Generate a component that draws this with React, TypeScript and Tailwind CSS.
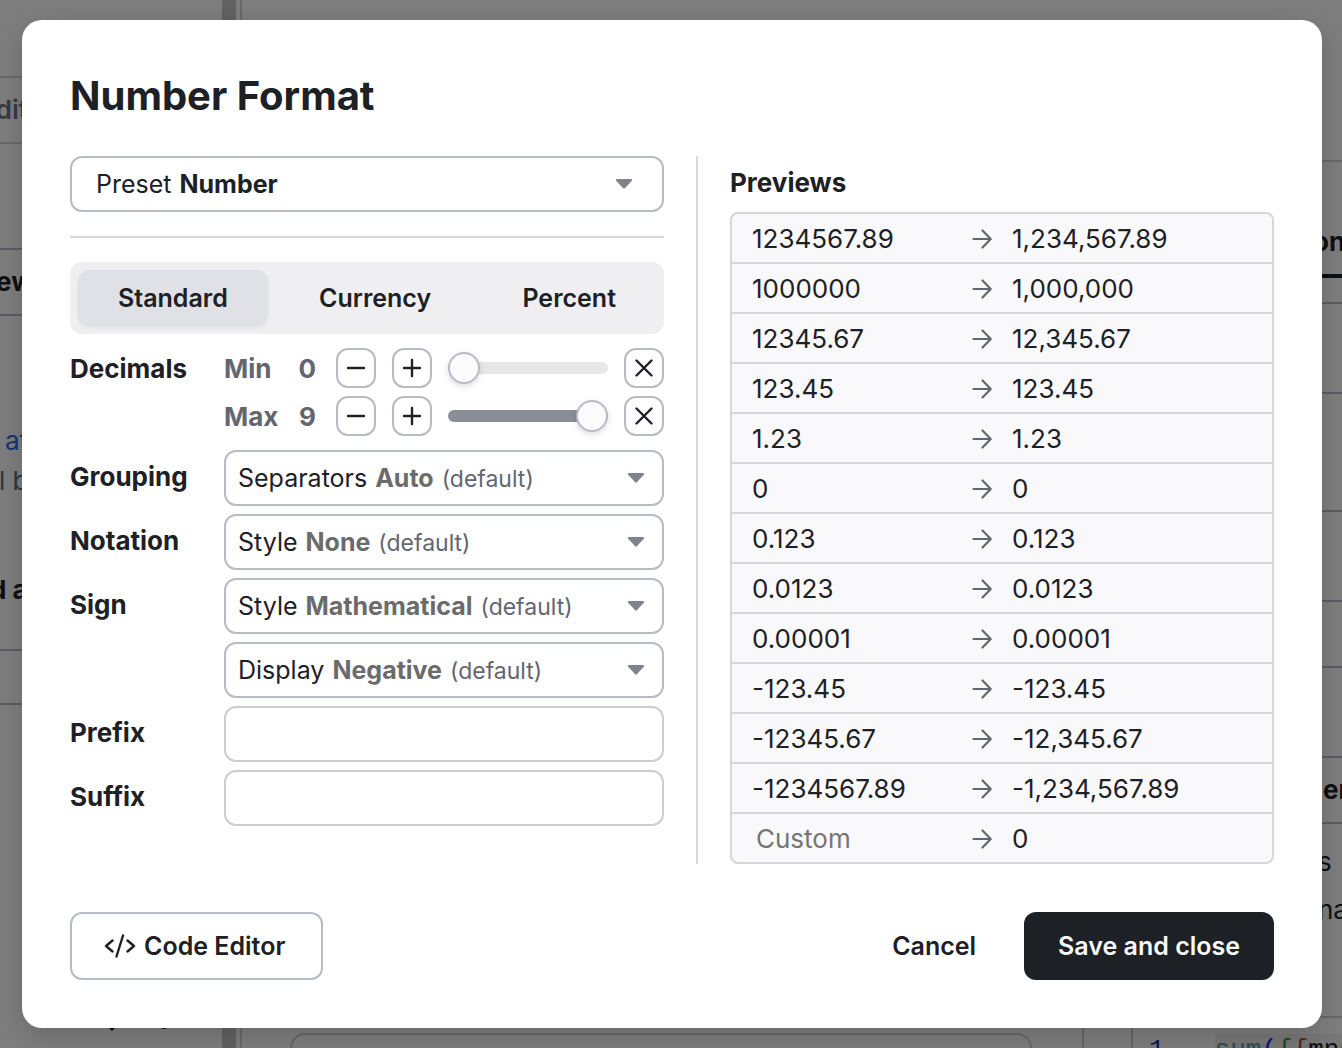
import { useState } from "react";
import type { ReactNode } from "react";

const previews = [
  ["1234567.89", "1,234,567.89"],
  ["1000000", "1,000,000"],
  ["12345.67", "12,345.67"],
  ["123.45", "123.45"],
  ["1.23", "1.23"],
  ["0", "0"],
  ["0.123", "0.123"],
  ["0.0123", "0.0123"],
  ["0.00001", "0.00001"],
  ["-123.45", "-123.45"],
  ["-12345.67", "-12,345.67"],
  ["-1234567.89", "-1,234,567.89"],
];

function Caret() {
  return (
    <svg className="h-[10px] w-4 shrink-0" viewBox="0 0 16 10" fill="#80838e" aria-hidden="true">
      <path d="M1.2 0H14.8C15.9 0 16.4 1.3 15.6 2.1L9.1 8.9C8.5 9.6 7.5 9.6 6.9 8.9L.4 2.1C-.4 1.3.1 0 1.2 0Z" />
    </svg>
  );
}

function Arrow() {
  return (
    <svg className="block h-5 w-5" viewBox="0 0 20 20" fill="none" stroke="#63666e" strokeWidth="2.2" strokeLinecap="round" strokeLinejoin="round" aria-hidden="true">
      <path d="M1.5 10H18.5M10.5 1.5L18.7 10L10.5 18.5" />
    </svg>
  );
}

function Picker({ label, options, suffix, wide }: { label: string; options: string[]; suffix?: string; wide?: boolean }) {
  const [value, setValue] = useState(options[0]);
  return (
    <label
      className={
        "relative flex h-14 w-full shrink-0 items-center justify-between rounded-xl border-2 border-[#b8bac6] bg-white " +
        (wide ? "pl-6 pr-[30px]" : "pl-3 pr-[18px]")
      }
    >
      <span className="flex items-baseline gap-2 whitespace-nowrap text-[25px] leading-8">
        <span>{label}</span>
        <span className={suffix ? "font-bold text-[#6b6b6b]" : "font-bold"}>{value}</span>
        {suffix && <span className="text-[23px] text-[#63666e]">{suffix}</span>}
      </span>
      <Caret />
      <select
        aria-label={label}
        value={value}
        onChange={(e) => setValue(e.target.value)}
        className="absolute inset-0 h-full w-full cursor-pointer opacity-0"
      >
        {options.map((o) => (
          <option key={o}>{o}</option>
        ))}
      </select>
    </label>
  );
}

function IconButton({ label, path, onClick }: { label: string; path: string; onClick: () => void }) {
  return (
    <button
      type="button"
      aria-label={label}
      onClick={onClick}
      className="flex h-10 w-10 shrink-0 items-center justify-center rounded-xl border-2 border-[#b8bac6] bg-white"
    >
      <svg className="h-5 w-5" viewBox="0 0 20 20" fill="none" stroke="#1d2025" strokeWidth="2.4" strokeLinecap="round" aria-hidden="true">
        <path d={path} />
      </svg>
    </button>
  );
}

function DecimalRow({ label, initial }: { label: string; initial: number }) {
  const [value, setValue] = useState(initial);
  const percent = (value / 9) * 100;
  return (
    <div className="flex h-10 items-center gap-4">
      <div className="flex w-24 justify-between pr-1 pt-[2px] text-[26px] leading-8 font-bold text-[#63666e]">
        <span>{label}</span>
        <span>{value}</span>
      </div>
      <IconButton label={"Decrease " + label} path="M2 10H18" onClick={() => setValue(Math.max(0, value - 1))} />
      <IconButton label={"Increase " + label} path="M2 10H18M10 2V18" onClick={() => setValue(Math.min(9, value + 1))} />
      <input
        type="range"
        aria-label={label + " decimals"}
        min={0}
        max={9}
        value={value}
        onChange={(e) => setValue(Number(e.target.value))}
        style={{ backgroundImage: `linear-gradient(to right, #8b8e97 ${percent}%, #e7e7e7 ${percent}%)` }}
        className="h-3 min-w-0 flex-1 appearance-none rounded-full [&::-webkit-slider-thumb]:h-8 [&::-webkit-slider-thumb]:w-8 [&::-webkit-slider-thumb]:appearance-none [&::-webkit-slider-thumb]:rounded-full [&::-webkit-slider-thumb]:border-2 [&::-webkit-slider-thumb]:border-[#b8bac6] [&::-webkit-slider-thumb]:bg-[#fcfcfd] [&::-webkit-slider-thumb]:shadow-[0_2px_6px_rgba(0,0,0,0.14)]"
      />
      <IconButton label={"Clear " + label} path="M2.5 2.5L17.5 17.5M17.5 2.5L2.5 17.5" onClick={() => setValue(initial)} />
    </div>
  );
}

function Field({ label, children }: { label: string; children: ReactNode }) {
  return (
    <div className="flex">
      <div className="w-[154px] shrink-0 pt-[11px] text-[26px] leading-8 font-bold">{label}</div>
      <div className="flex min-w-0 flex-1 flex-col gap-2">{children}</div>
    </div>
  );
}

function TextField({ label }: { label: string }) {
  const id = label.toLowerCase();
  return (
    <div className="flex h-14">
      <label htmlFor={id} className="w-[154px] shrink-0 pt-[11px] text-[26px] leading-8 font-bold">
        {label}
      </label>
      <input id={id} type="text" className="h-14 min-w-0 flex-1 rounded-xl border-2 border-[#cccdd3] bg-white px-3 text-[25px]" />
    </div>
  );
}

function Background() {
  return (
    <div aria-hidden="true" className="flex h-screen overflow-hidden bg-white whitespace-nowrap">
      <div className="w-[222px] shrink-0 overflow-hidden text-[26px] leading-8">
        <div className="h-[76px]" />
        <div className="-ml-5 flex h-[68px] items-center border-y-2 border-[#d5d5d8] font-semibold text-[#77777c]">Edit</div>
        <div className="h-[104px]" />
        <div className="-ml-[4px] flex h-[68px] items-center border-y-2 border-[#b8bac6] font-bold">ew</div>
        <div className="h-[109px] px-[5px] pt-[109px] text-[#2f6bea]">at</div>
        <div className="-ml-px pt-[40px] text-[#66686f]">l be</div>
        <div className="-ml-[10px] pt-[77px] font-bold">d a</div>
        <div className="mt-[43px] h-14 border-y-2 border-[#b8bac6]" />
        <div className="flex h-[326px] items-end gap-10 pl-[106px]">
          <svg className="h-[18px] w-3" viewBox="0 0 12 18" fill="none" stroke="#1d2025" strokeWidth="3">
            <path d="M1 11L6 16L11 11" />
          </svg>
          <svg className="h-4 w-3" viewBox="0 0 12 16" fill="none" stroke="#1d2025" strokeWidth="2">
            <circle cx="6" cy="8" r="5" />
          </svg>
        </div>
      </div>
      <div className="w-[14px] shrink-0 bg-[#c6c6c6]" />
      <div className="ml-1 flex flex-1 items-end border-l-2 border-[#d5d5d8] pl-12">
        <div className="h-[15px] flex-1 rounded-t-2xl border-2 border-b-0 border-[#d0d0d3]" />
        <div className="ml-[50px] box-content h-8 w-[47px] border-x-2 border-[#d0d0d3]" />
      </div>
      <div className="w-[209px] shrink-0 overflow-hidden text-[26px] leading-8">
        <div className="box-content h-[160px] border-b-2 border-[#d5d5d8]" />
        <div className="h-28 pl-[180px] pt-16 font-bold">on</div>
        <div className="h-1 bg-[#1d2025]" />
        <div className="h-6" />
        <div className="h-[92px] border-y-2 border-[#b8bac6]" />
        <div className="h-[118px] border-b-2 border-[#b8bac6]" />
        <div className="h-[90px] border-b-2 border-[#b8bac6]" />
        <div className="h-[66px] border-b-2 border-[#b8bac6]" />
        <div className="h-[90px] border-b-2 border-[#b8bac6]" />
        <div className="flex h-[66px] items-center border-b-2 border-[#b8bac6] pl-[190px] font-bold">en</div>
        <div className="flex h-[194px] flex-col gap-4 border-b-2 border-[#d0d0d3] pl-[185px] pt-[22px]">
          <span>s</span>
          <span>na</span>
        </div>
        <div className="flex gap-[50px] pl-4 pt-4 font-mono">
          <span className="text-[#1b2fa0]">1</span>
          <span className="bg-[#f0f0f0]">
            <span className="text-[#5c97a8]">sum</span>
            <span className="text-[#1020ff]">(</span>
            <span className="text-[#3f9142]">{"{"}</span>
            <span className="text-[#a4522d]">{"{"}</span>mnn
          </span>
        </div>
      </div>
    </div>
  );
}

export default function App() {
  const [tab, setTab] = useState("Standard");
  return (
    <div className="relative font-['Inter',sans-serif] text-[#1d2025] [font-optical-sizing:none]">
      <Background />
      <div className="absolute inset-0 flex items-start justify-center bg-black/50 py-5 pl-[22px] pr-5">
        <div role="dialog" aria-modal="true" aria-labelledby="title" className="w-full rounded-[20px] bg-white p-12 shadow-[0_8px_32px_rgba(0,0,0,0.2)]">
          <h1 id="title" className="text-[40px] leading-14 font-bold">
            Number Format
          </h1>

          <div className="mt-8 grid grid-cols-[minmax(0,1fr)_2px_544px] gap-8">
            <div>
              <Picker label="Preset" options={["Number", "Currency", "Percent", "Date"]} wide />
              <hr className="my-6 border-t-2 border-[#d8d9e0]" />
              <div role="tablist" className="flex h-[72px] justify-between rounded-xl bg-[#efeff1] p-2">
                {["Standard", "Currency", "Percent"].map((t) => (
                  <button
                    key={t}
                    type="button"
                    role="tab"
                    aria-selected={tab === t}
                    onClick={() => setTab(t)}
                    className={
                      "rounded-xl px-10 text-[25px] leading-8 font-semibold " +
                      (tab === t ? "bg-[#e0e1e6] shadow-[0_2px_4px_rgba(0,0,0,0.06)]" : "")
                    }
                  >
                    {t}
                  </button>
                ))}
              </div>

              <div className="my-[14px] flex">
                <div className="w-[154px] shrink-0 pt-[5px] text-[26px] leading-8 font-bold">Decimals</div>
                <div className="flex min-w-0 flex-1 flex-col gap-2">
                  <DecimalRow label="Min" initial={0} />
                  <DecimalRow label="Max" initial={9} />
                </div>
              </div>

              <div className="flex flex-col gap-2">
                <Field label="Grouping">
                  <Picker label="Separators" options={["Auto", "Always", "Never"]} suffix="(default)" />
                </Field>
                <Field label="Notation">
                  <Picker label="Style" options={["None", "Compact", "Scientific"]} suffix="(default)" />
                </Field>
                <Field label="Sign">
                  <Picker label="Style" options={["Mathematical", "Accounting"]} suffix="(default)" />
                  <Picker label="Display" options={["Negative", "Always", "Never"]} suffix="(default)" />
                </Field>
                <TextField label="Prefix" />
                <TextField label="Suffix" />
              </div>
            </div>

            <div className="bg-[#d8d9e0]" />

            <div>
              <h2 className="pb-[13px] pt-[11px] text-[26px] leading-8 font-bold">Previews</h2>
              <div className="overflow-hidden rounded-lg border-2 border-[#d5d6d8] bg-[#f9f9fb]">
                <table
                  className="w-full table-fixed border-separate border-spacing-0 text-[26px] leading-8 [&_td]:pt-[2px]"
                  aria-label="Previews"
                >
                  <colgroup>
                    <col className="w-[240px]" />
                    <col className="w-10" />
                    <col />
                  </colgroup>
                  <tbody>
                    {previews.map(([input, output]) => (
                      <tr key={input} className="h-[50px] [&>td]:border-b-2 [&>td]:border-[#d5d6d8]">
                        <td className="pl-5">{input}</td>
                        <td>
                          <Arrow />
                        </td>
                        <td>{output}</td>
                      </tr>
                    ))}
                    <tr className="h-12">
                      <td className="pl-6">
                        <input
                          type="text"
                          aria-label="Custom"
                          placeholder="Custom"
                          className="block h-8 w-full bg-transparent placeholder:text-[#757575] placeholder:opacity-100"
                        />
                      </td>
                      <td>
                        <Arrow />
                      </td>
                      <td>0</td>
                    </tr>
                  </tbody>
                </table>
              </div>
            </div>
          </div>

          <div className="mt-12 flex h-[68px] gap-4 text-[25px] leading-8 font-semibold">
            <button type="button" className="mr-auto flex items-center gap-2 rounded-xl border-2 border-[#b8bac6] pl-8 pr-9">
              <svg className="h-6 w-8" viewBox="0 0 32 24" fill="none" stroke="#1d2025" strokeWidth="2.4" strokeLinecap="round" strokeLinejoin="round" aria-hidden="true">
                <path d="M8.5 6.5L2 12L8.5 17.5M23.5 6.5L30 12L23.5 17.5M19 1.5L12.5 22.5" />
              </svg>
              Code Editor
            </button>
            <button type="button" className="px-8">
              Cancel
            </button>
            <button type="button" className="rounded-xl bg-[#1d2025] px-[34px] text-[#f9f9fb]">
              Save and close
            </button>
          </div>
        </div>
      </div>
    </div>
  );
}
